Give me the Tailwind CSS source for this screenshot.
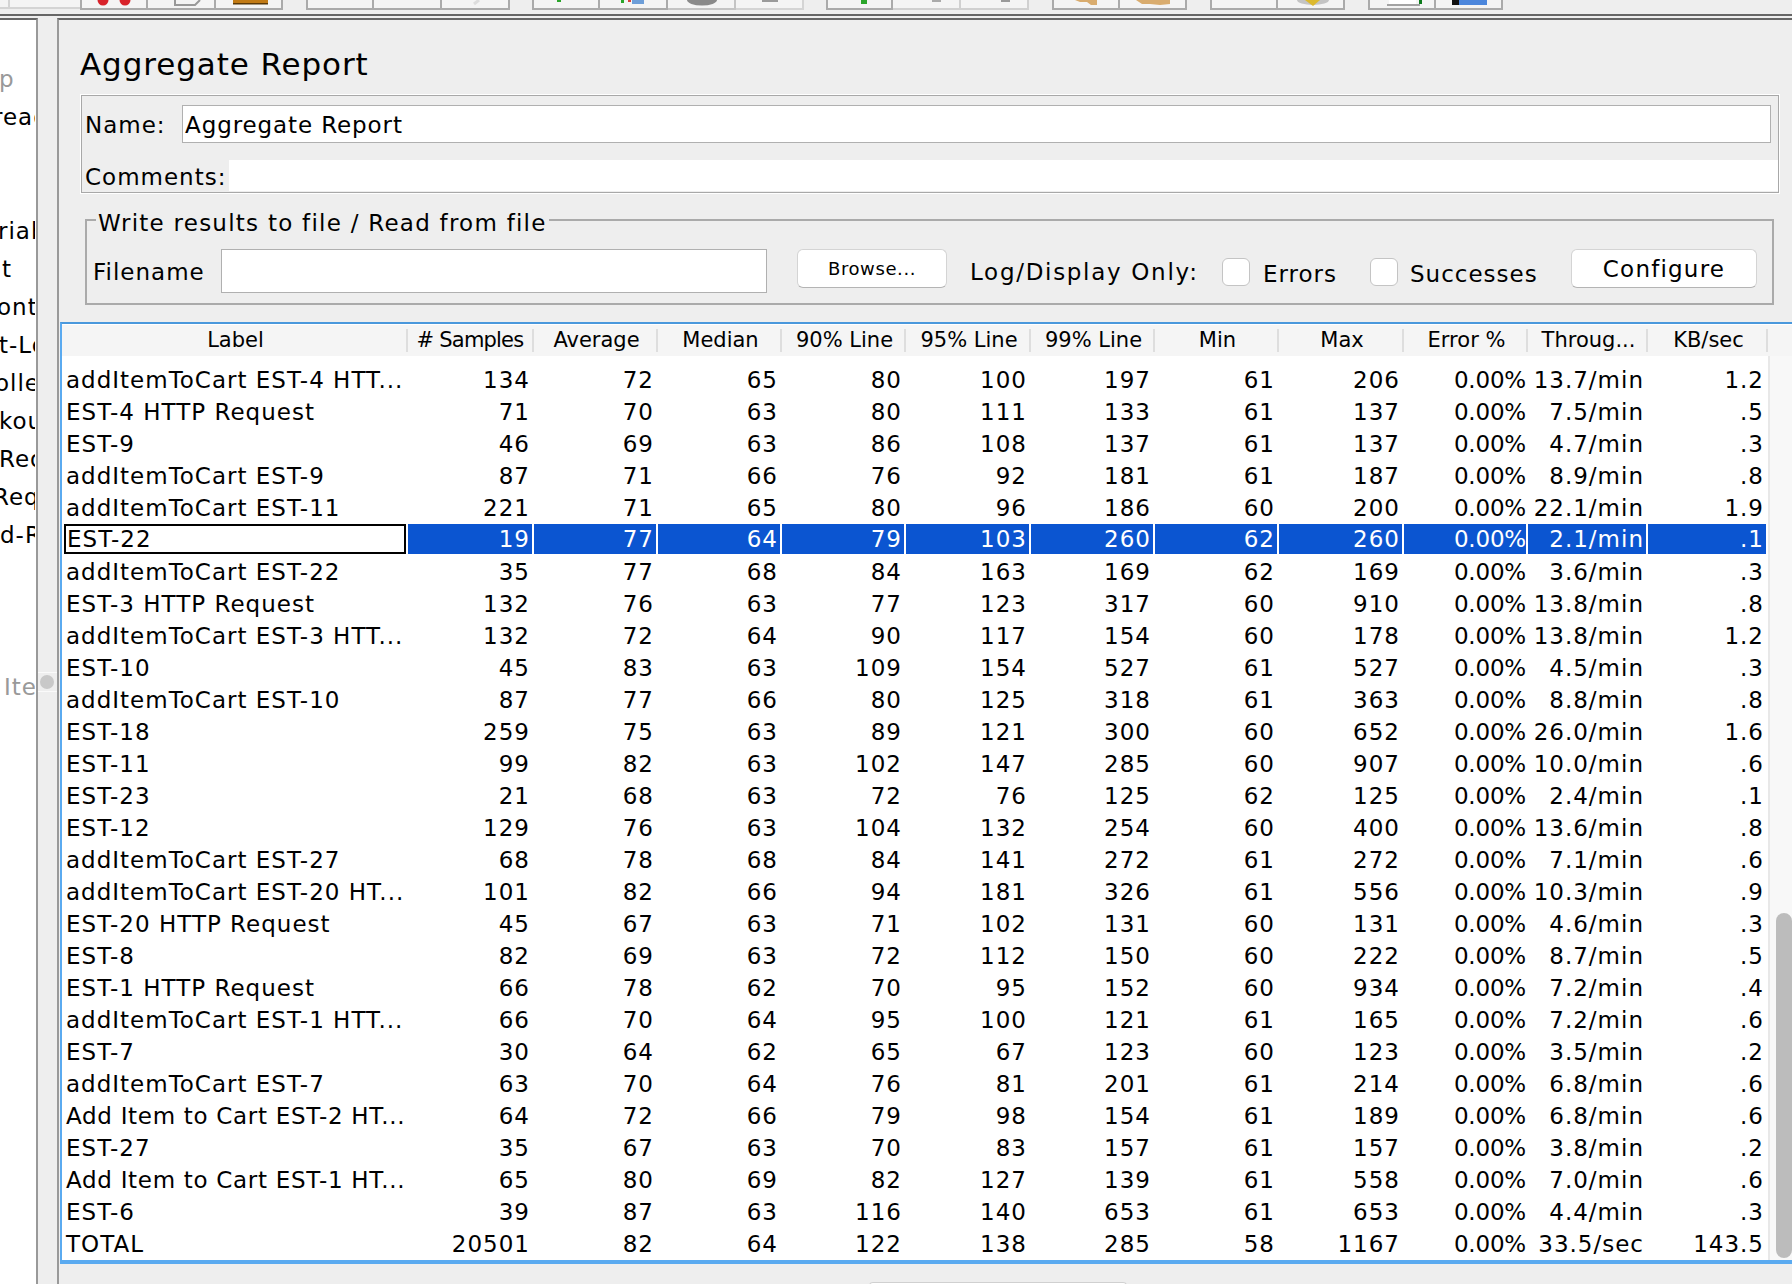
<!DOCTYPE html>
<html><head><meta charset="utf-8"><script src="https://cdn.jsdelivr.net/npm/@tailwindcss/browser@4"></script></head>
<body class="m-0 h-[1284px] w-[1792px] overflow-hidden bg-[#eeeeee] font-['DejaVu_Sans',sans-serif] text-[23px] leading-[30px] tracking-[1px] text-black">

<!-- toolbar -->
<div class="flex h-[14px] items-start bg-[#eeeeee]">
  <div class="h-[9px] w-[10px] border-r-2 border-b-2 border-[#d4d4d4] bg-[#f4f4f4]"></div>
  <div class="h-[9px] w-[70px] border-b-2 border-[#d4d4d4] bg-[#f4f4f4]"></div>
  <div class="flex">
    <div class="h-[10px] w-[68px] border-x-2 border-b-2 border-[#aaa] bg-[#f4f4f4]"><svg class="h-[8px] w-[64px]" viewBox="0 0 64 8"><circle cx="21" cy="0" r="5.5" fill="#d8222a"/><circle cx="43" cy="0" r="5.5" fill="#d8222a"/></svg></div>
    <div class="h-[10px] w-[68px] border-r-2 border-b-2 border-[#aaa] bg-[#f4f4f4]"><svg class="h-[8px] w-[66px]" viewBox="0 0 66 8"><path d="M27 0V5H47L52 0" fill="#f4f4f4" stroke="#999" stroke-width="2"/></svg></div>
    <div class="h-[10px] w-[67px] border-r-2 border-b-2 border-[#aaa] bg-[#f4f4f4]"><svg class="h-[8px] w-[65px]" viewBox="0 0 65 8"><rect x="17" y="0" width="35" height="3" fill="#c17a14"/><rect x="17" y="3" width="35" height="1.5" fill="#5b3a08"/></svg></div>
  </div>
  <div class="ml-[23px] flex">
    <div class="h-[10px] w-[68px] border-x-2 border-b-2 border-[#aaa] bg-[#f4f4f4]"></div>
    <div class="h-[10px] w-[68px] border-r-2 border-b-2 border-[#aaa] bg-[#f4f4f4]"></div>
    <div class="h-[10px] w-[68px] border-r-2 border-b-2 border-[#aaa] bg-[#f4f4f4]"><svg class="h-[8px] w-[66px]" viewBox="0 0 66 8"><path d="M32 4L37 0" stroke="#ddd" stroke-width="3"/></svg></div>
  </div>
  <div class="ml-[22px] flex">
    <div class="h-[10px] w-[68px] border-x-2 border-b-2 border-[#aaa] bg-[#f4f4f4]"><svg class="h-[8px] w-[64px]" viewBox="0 0 64 8"><rect x="23" y="0" width="4" height="2" fill="#2aa52a"/></svg></div>
    <div class="h-[10px] w-[68px] border-r-2 border-b-2 border-[#aaa] bg-[#f4f4f4]"><svg class="h-[8px] w-[66px]" viewBox="0 0 66 8"><rect x="21" y="0" width="3" height="3" fill="#2aa52a"/><rect x="28" y="0" width="3" height="2" fill="#d8403a"/><rect x="32" y="0" width="12" height="4" fill="#6d9ed8"/></svg></div>
    <div class="h-[10px] w-[68px] border-r-2 border-b-2 border-[#c4c4c4] bg-[#f4f4f4]"><svg class="h-[8px] w-[66px]" viewBox="0 0 66 8"><ellipse cx="34" cy="0" rx="15" ry="5.5" fill="#8a8a8a"/></svg></div>
    <div class="h-[10px] w-[68px] border-r-2 border-b-2 border-[#d4d4d4] bg-[#f4f4f4]"><svg class="h-[8px] w-[66px]" viewBox="0 0 66 8"><rect x="26" y="0" width="16" height="2" fill="#9a9a9a"/></svg></div>
  </div>
  <div class="ml-[22px] flex">
    <div class="h-[10px] w-[67px] border-x-2 border-b-2 border-[#aaa] bg-[#f4f4f4]"><svg class="h-[8px] w-[63px]" viewBox="0 0 63 8"><rect x="33" y="0" width="6" height="4" fill="#2aa52a"/></svg></div>
    <div class="h-[10px] w-[68px] border-r-2 border-b-2 border-[#d0d0d0] bg-[#f4f4f4]"><svg class="h-[8px] w-[66px]" viewBox="0 0 66 8"><rect x="39" y="0" width="9" height="2" fill="#aaa"/></svg></div>
    <div class="h-[10px] w-[68px] border-r-2 border-b-2 border-[#d0d0d0] bg-[#f4f4f4]"><svg class="h-[8px] w-[66px]" viewBox="0 0 66 8"><rect x="40" y="0" width="9" height="2" fill="#9a9a9a"/></svg></div>
  </div>
  <div class="ml-[23px] flex">
    <div class="h-[10px] w-[68px] border-x-2 border-b-2 border-[#aaa] bg-[#f4f4f4]"><svg class="h-[8px] w-[64px]" viewBox="0 0 64 8"><path d="M21 0H43V5H37L33 2H26Z" fill="#d9ac6e"/></svg></div>
    <div class="h-[10px] w-[67px] border-r-2 border-b-2 border-[#aaa] bg-[#f4f4f4]"><svg class="h-[8px] w-[65px]" viewBox="0 0 65 8"><path d="M16 0H50V4L40 5L30 4H22Z" fill="#d9ac6e"/></svg></div>
  </div>
  <div class="ml-[23px] flex">
    <div class="h-[10px] w-[68px] border-x-2 border-b-2 border-[#aaa] bg-[#f4f4f4]"></div>
    <div class="h-[10px] w-[67px] border-r-2 border-b-2 border-[#aaa] bg-[#f4f4f4]"><svg class="h-[8px] w-[65px]" viewBox="0 0 65 8"><ellipse cx="35" cy="0" rx="16" ry="5" fill="#c4c4c4"/><path d="M27 0H42L35 6Z" fill="#dcb92e"/></svg></div>
  </div>
  <div class="ml-[23px] flex">
    <div class="h-[10px] w-[68px] border-x-2 border-b-2 border-[#aaa] bg-[#f4f4f4]"><svg class="h-[8px] w-[64px]" viewBox="0 0 64 8"><path d="M17 5H50" stroke="#888" stroke-width="1.5"/><path d="M19 0H46V4H19Z" fill="#fff"/><rect x="49" y="0" width="3" height="4" fill="#0a7a1a"/></svg></div>
    <div class="h-[10px] w-[67px] border-r-2 border-b-2 border-[#aaa] bg-[#f4f4f4]"><svg class="h-[8px] w-[65px]" viewBox="0 0 65 8"><rect x="16" y="0" width="7" height="5" fill="#111"/><rect x="23" y="0" width="28" height="5" fill="#4b86dc"/></svg></div>
  </div>
</div>

<div class="h-[2px] bg-[#666]"></div>
<div class="h-[2px]"></div>

<div class="flex h-[1266px]">
  <!-- tree pane -->
  <div class="h-full w-[38px] border-t-2 border-r-2 border-t-[#666] border-r-[#999] bg-white">
    <div class="h-full w-[35px] overflow-hidden pt-[40px] whitespace-nowrap leading-[38px]">
      <div class="h-[38px] -ml-[1px] text-[#999]">p</div>
      <div class="h-[38px] -ml-[7px]">read</div>
      <div class="h-[76px]"></div>
      <div class="h-[38px] -ml-[2px]">riable</div>
      <div class="h-[38px] ml-[2px]">t</div>
      <div class="h-[38px] -ml-[3px]">ontroller</div>
      <div class="h-[38px] -ml-[1px]">t-Login</div>
      <div class="h-[38px] -ml-[5px]">ollection</div>
      <div class="h-[38px] -ml-[1px]">kout</div>
      <div class="h-[38px] -ml-[1px]">Request</div>
      <div class="h-[38px] -ml-[7px]">Request</div>
      <div class="h-[38px]">d-Report</div>
      <div class="h-[114px]"></div>
      <div class="h-[38px] ml-[4px] text-[#999]">Item</div>
    </div>
  </div>
  <!-- divider -->
  <div class="h-full w-[19px] pt-[654px]">
    <div class="flex h-[20px] items-center justify-center border-y border-[#fafafa] pr-[1px]">
      <div class="h-[14px] w-[14px] rounded-full bg-[#c8c8c8]"></div>
    </div>
  </div>
  <!-- main panel -->
  <div class="h-full flex-1 border-t-2 border-l-2 border-t-[#666] border-l-[#999]">
    <div class="pl-[21px] pt-[25px] h-[75px] text-[31px] leading-[38px] tracking-[0.9px]">Aggregate Report</div>

    <div class="ml-[22px] h-[98px] w-[1698px] border border-[#a8a8a8] outline outline-white pl-[3px] pt-[9px]">
      <div class="flex h-[38px] items-center">
        <div class="w-[97px] pt-[2px]">Name:</div>
        <div class="h-[38px] w-[1589px] border border-[#b0b0b0] bg-white pl-[2px] leading-[38px] tracking-[0.9px]">Aggregate Report</div>
      </div>
      <div class="mt-[17px] flex h-[31px] items-center">
        <div class="w-[144px] whitespace-nowrap pt-[3px]">Comments:</div>
        <div class="h-[31px] flex-1 bg-white"></div>
      </div>
    </div>

    <div class="relative ml-[26px] mt-[26px] h-[86px] w-[1689px] border-2 border-[#aaa] pt-[28px]">
      <div class="absolute -top-[13px] left-[9px] bg-[#eeeeee] px-[2px] leading-[30px] tracking-[1.25px]">Write results to file / Read from file</div>
      <div class="flex items-start">
        <div class="ml-[6px] w-[128px] leading-[46px]">Filename</div>
        <div class="h-[44px] w-[546px] border border-[#b0b0b0] bg-white"></div>
        <div class="ml-[30px] flex h-[39px] w-[150px] items-center justify-center rounded-[6px] border border-[#d4d4d4] border-b-[#b4b4b4] bg-white pt-[1px] text-[18px] tracking-[0.6px]">Browse...</div>
        <div class="ml-[23px] w-[252px] whitespace-nowrap leading-[46px] tracking-[1.7px]">Log/Display Only:</div>
        <div class="mt-[9px] h-[28px] w-[28px] rounded-[6px] border border-[#c4c4c4] bg-white"></div>
        <div class="ml-[13px] w-[107px] leading-[50px]">Errors</div>
        <div class="mt-[9px] h-[28px] w-[28px] rounded-[6px] border border-[#c4c4c4] bg-white"></div>
        <div class="ml-[12px] w-[161px] leading-[50px]">Successes</div>
        <div class="flex h-[39px] w-[186px] items-center justify-center rounded-[6px] border border-[#d4d4d4] border-b-[#b4b4b4] bg-white pt-[1px] tracking-[1.2px]">Configure</div>
      </div>
    </div>

    <!-- table frame -->
    <div class="ml-[1px] mt-[17px] flex h-[942px] border-t-2 border-b-4 border-l-2 border-t-[#4a98dc] border-b-[#5aaaf0] border-l-[#5aaaf0] bg-white pt-[1px]">
      <table class="h-min w-[1706px] table-fixed border-separate border-spacing-0 whitespace-nowrap [&_td]:h-[32px] [&_td]:overflow-hidden [&_td]:p-0 [&_td]:pr-[4px] [&_td]:text-right [&_td]:leading-[32px] [&_td:first-child]:pl-[4px] [&_td:first-child]:text-left [&_td:nth-child(10)]:pr-[2px] [&_td:nth-child(10)]:tracking-[-0.2px]">
        <colgroup>
          <col class="w-[346px]"><col class="w-[126px]"><col class="w-[124px]"><col class="w-[124px]"><col class="w-[124px]"><col class="w-[125px]"><col class="w-[124px]"><col class="w-[124px]"><col class="w-[125px]"><col class="w-[124px]"><col class="w-[120px]"><col class="w-[120px]">
        </colgroup>
        <thead class="text-[21px] font-normal tracking-[0px] [&_th]:h-[31px] [&_th]:bg-[#f5f5f5] [&_th]:p-0 [&_th]:font-normal [&_th>div]:h-[23px] [&_th>div]:border-r-2 [&_th>div]:border-[#dedede] [&_th>div]:pl-[3px] [&_th>div]:leading-[23px]">
          <tr><th><div>Label</div></th><th><div class="pl-0! tracking-[-0.8px]"># Samples</div></th><th><div>Average</div></th><th><div>Median</div></th><th><div>90% Line</div></th><th><div>95% Line</div></th><th><div>99% Line</div></th><th><div>Min</div></th><th><div>Max</div></th><th><div>Error %</div></th><th><div>Throug...</div></th><th><div>KB/sec</div></th></tr>
        </thead>
        <tbody>
          <tr><td colspan="12" class="h-[8px]!"></td></tr>
          <tr><td>addItemToCart EST-4 HTT...</td><td>134</td><td>72</td><td>65</td><td>80</td><td>100</td><td>197</td><td>61</td><td>206</td><td>0.00%</td><td>13.7/min</td><td>1.2</td></tr>
          <tr><td>EST-4 HTTP Request</td><td>71</td><td>70</td><td>63</td><td>80</td><td>111</td><td>133</td><td>61</td><td>137</td><td>0.00%</td><td>7.5/min</td><td>.5</td></tr>
          <tr><td>EST-9</td><td>46</td><td>69</td><td>63</td><td>86</td><td>108</td><td>137</td><td>61</td><td>137</td><td>0.00%</td><td>4.7/min</td><td>.3</td></tr>
          <tr><td>addItemToCart EST-9</td><td>87</td><td>71</td><td>66</td><td>76</td><td>92</td><td>181</td><td>61</td><td>187</td><td>0.00%</td><td>8.9/min</td><td>.8</td></tr>
          <tr><td>addItemToCart EST-11</td><td>221</td><td>71</td><td>65</td><td>80</td><td>96</td><td>186</td><td>60</td><td>200</td><td>0.00%</td><td>22.1/min</td><td>1.9</td></tr>
          <tr class="text-white [&_td]:border-b-2 [&_td]:border-r-2 [&_td]:border-white [&_td]:bg-[#0b55d1] [&_td]:pr-[2px]! [&_td]:leading-[30px]! [&_td:first-child]:bg-white [&_td:first-child]:pr-0! [&_td:first-child]:pl-0! [&_td:first-child]:text-black [&_td:nth-child(10)]:pr-0!">
            <td><div class="ml-[2px] h-[30px] border-2 border-black pl-[1px] leading-[26px]">EST-22</div></td><td>19</td><td>77</td><td>64</td><td>79</td><td>103</td><td>260</td><td>62</td><td>260</td><td>0.00%</td><td>2.1/min</td><td>.1</td></tr>
          <tr><td>addItemToCart EST-22</td><td>35</td><td>77</td><td>68</td><td>84</td><td>163</td><td>169</td><td>62</td><td>169</td><td>0.00%</td><td>3.6/min</td><td>.3</td></tr>
          <tr><td>EST-3 HTTP Request</td><td>132</td><td>76</td><td>63</td><td>77</td><td>123</td><td>317</td><td>60</td><td>910</td><td>0.00%</td><td>13.8/min</td><td>.8</td></tr>
          <tr><td>addItemToCart EST-3 HTT...</td><td>132</td><td>72</td><td>64</td><td>90</td><td>117</td><td>154</td><td>60</td><td>178</td><td>0.00%</td><td>13.8/min</td><td>1.2</td></tr>
          <tr><td>EST-10</td><td>45</td><td>83</td><td>63</td><td>109</td><td>154</td><td>527</td><td>61</td><td>527</td><td>0.00%</td><td>4.5/min</td><td>.3</td></tr>
          <tr><td>addItemToCart EST-10</td><td>87</td><td>77</td><td>66</td><td>80</td><td>125</td><td>318</td><td>61</td><td>363</td><td>0.00%</td><td>8.8/min</td><td>.8</td></tr>
          <tr><td>EST-18</td><td>259</td><td>75</td><td>63</td><td>89</td><td>121</td><td>300</td><td>60</td><td>652</td><td>0.00%</td><td>26.0/min</td><td>1.6</td></tr>
          <tr><td>EST-11</td><td>99</td><td>82</td><td>63</td><td>102</td><td>147</td><td>285</td><td>60</td><td>907</td><td>0.00%</td><td>10.0/min</td><td>.6</td></tr>
          <tr><td>EST-23</td><td>21</td><td>68</td><td>63</td><td>72</td><td>76</td><td>125</td><td>62</td><td>125</td><td>0.00%</td><td>2.4/min</td><td>.1</td></tr>
          <tr><td>EST-12</td><td>129</td><td>76</td><td>63</td><td>104</td><td>132</td><td>254</td><td>60</td><td>400</td><td>0.00%</td><td>13.6/min</td><td>.8</td></tr>
          <tr><td>addItemToCart EST-27</td><td>68</td><td>78</td><td>68</td><td>84</td><td>141</td><td>272</td><td>61</td><td>272</td><td>0.00%</td><td>7.1/min</td><td>.6</td></tr>
          <tr><td>addItemToCart EST-20 HT...</td><td>101</td><td>82</td><td>66</td><td>94</td><td>181</td><td>326</td><td>61</td><td>556</td><td>0.00%</td><td>10.3/min</td><td>.9</td></tr>
          <tr><td>EST-20 HTTP Request</td><td>45</td><td>67</td><td>63</td><td>71</td><td>102</td><td>131</td><td>60</td><td>131</td><td>0.00%</td><td>4.6/min</td><td>.3</td></tr>
          <tr><td>EST-8</td><td>82</td><td>69</td><td>63</td><td>72</td><td>112</td><td>150</td><td>60</td><td>222</td><td>0.00%</td><td>8.7/min</td><td>.5</td></tr>
          <tr><td>EST-1 HTTP Request</td><td>66</td><td>78</td><td>62</td><td>70</td><td>95</td><td>152</td><td>60</td><td>934</td><td>0.00%</td><td>7.2/min</td><td>.4</td></tr>
          <tr><td>addItemToCart EST-1 HTT...</td><td>66</td><td>70</td><td>64</td><td>95</td><td>100</td><td>121</td><td>61</td><td>165</td><td>0.00%</td><td>7.2/min</td><td>.6</td></tr>
          <tr><td>EST-7</td><td>30</td><td>64</td><td>62</td><td>65</td><td>67</td><td>123</td><td>60</td><td>123</td><td>0.00%</td><td>3.5/min</td><td>.2</td></tr>
          <tr><td>addItemToCart EST-7</td><td>63</td><td>70</td><td>64</td><td>76</td><td>81</td><td>201</td><td>61</td><td>214</td><td>0.00%</td><td>6.8/min</td><td>.6</td></tr>
          <tr><td class="tracking-[0.7px]">Add Item to Cart EST-2 HT...</td><td>64</td><td>72</td><td>66</td><td>79</td><td>98</td><td>154</td><td>61</td><td>189</td><td>0.00%</td><td>6.8/min</td><td>.6</td></tr>
          <tr><td>EST-27</td><td>35</td><td>67</td><td>63</td><td>70</td><td>83</td><td>157</td><td>61</td><td>157</td><td>0.00%</td><td>3.8/min</td><td>.2</td></tr>
          <tr><td class="tracking-[0.7px]">Add Item to Cart EST-1 HT...</td><td>65</td><td>80</td><td>69</td><td>82</td><td>127</td><td>139</td><td>61</td><td>558</td><td>0.00%</td><td>7.0/min</td><td>.6</td></tr>
          <tr><td>EST-6</td><td>39</td><td>87</td><td>63</td><td>116</td><td>140</td><td>653</td><td>61</td><td>653</td><td>0.00%</td><td>4.4/min</td><td>.3</td></tr>
          <tr><td>TOTAL</td><td>20501</td><td>82</td><td>64</td><td>122</td><td>138</td><td>285</td><td>58</td><td>1167</td><td>0.00%</td><td>33.5/sec</td><td>143.5</td></tr>
        </tbody>
      </table>
      <!-- scrollbar -->
      <div class="flex h-full w-[24px] flex-col">
        <div class="h-[31px] bg-[#f5f5f5]"></div>
        <div class="flex-1 border-l-2 border-[#e8e8e8] bg-[#f8f8f8] pl-[6px] pt-[557px]">
          <div class="h-[345px] w-[16px] rounded-[8px] bg-[#bcbcbc]"></div>
        </div>
      </div>
    </div>

    <div class="ml-[810px] mt-[18px] h-[4px] w-[258px] rounded-t-[6px] border border-[#d0d0d0] bg-white"></div>
  </div>
</div>
</body></html>
